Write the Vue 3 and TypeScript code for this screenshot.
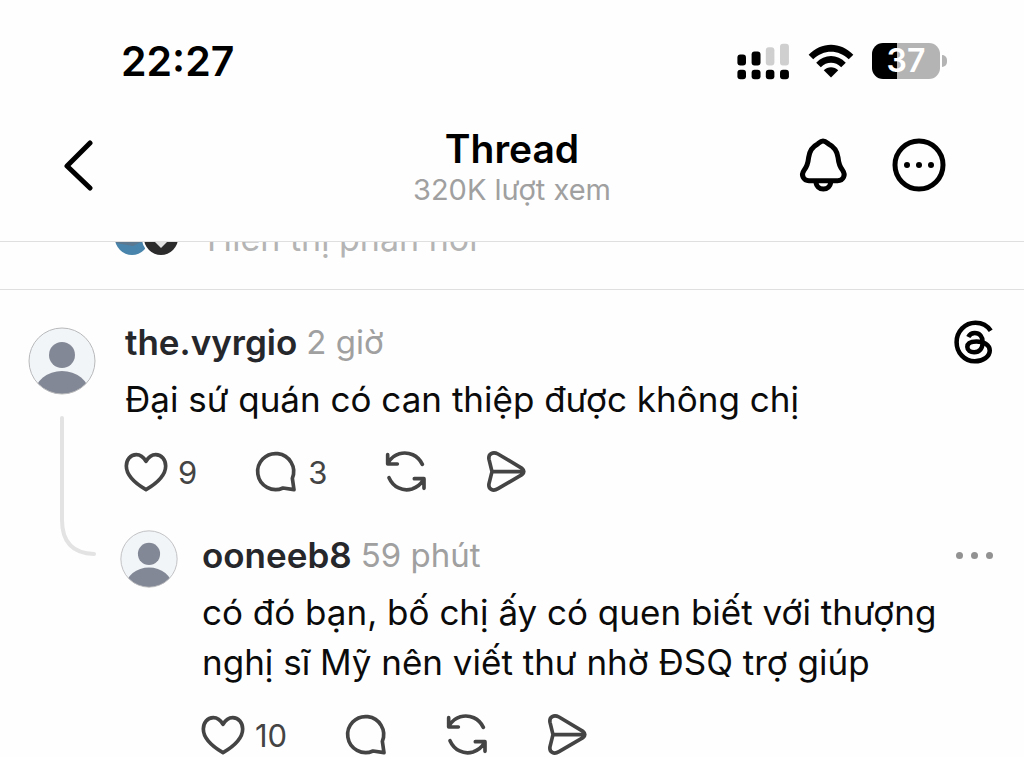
<script setup lang="ts">
interface Post {
  author: string
  age: string
  lines: string[]
  likes: number
  replies: number | null
}

const comment: Post = {
  author: 'the.vyrgio',
  age: '2 giờ',
  lines: ['Đại sứ quán có can thiệp được không chị'],
  likes: 9,
  replies: 3,
}

const reply: Post = {
  author: 'ooneeb8',
  age: '59 phút',
  lines: ['có đó bạn, bố chị ấy có quen biết với thượng', 'nghị sĩ Mỹ nên viết thư nhờ ĐSQ trợ giúp'],
  likes: 10,
  replies: null,
}

const posts = { comment, reply }
</script>

<template>
  <div class="screen">
    <div class="status">
      <time class="clock">22:27</time>
      <div class="indicators">
        <svg class="signal" viewBox="52 34 160 112" aria-hidden="true">
          <rect x="53" y="69" width="26" height="33" rx="9" />
          <rect x="96" y="60" width="27" height="42" rx="9" />
          <rect class="off" x="139" y="47" width="26" height="55" rx="9" />
          <rect class="off" x="182" y="36" width="27" height="66" rx="9" />
          <rect x="53" y="115" width="26" height="29" rx="9" />
          <rect x="96" y="115" width="27" height="29" rx="9" />
          <rect x="139" y="115" width="26" height="29" rx="9" />
          <rect x="182" y="115" width="27" height="29" rx="9" />
        </svg>
        <svg class="wifi" viewBox="262 36 140 106" aria-hidden="true">
          <path d="M264 70C302 29 362 29 400 70L386 84C355 53 309 53 278 84Z" />
          <path d="M287 94C312 67 352 67 377 94L363 108C345 90 319 90 301 108Z" />
          <path d="M310 117C322 105 342 105 354 117L332 139Z" />
        </svg>
        <div class="battery">
          <span class="level">37</span>
          <i class="nub"></i>
        </div>
      </div>
    </div>

    <header class="bar">
      <button class="icon-button back" type="button" aria-label="Quay lại">
        <svg viewBox="0 0 32 52"><path d="M28 4L5 27L28 49" /></svg>
      </button>
      <div class="titles">
        <h1>Thread</h1>
        <p>320K lượt xem</p>
      </div>
      <div class="tools">
        <button class="icon-button" type="button" aria-label="Thông báo">
          <svg viewBox="50 54 162 162">
            <path d="M128 63C121 63 117 68 112 72C96 80 88 92 85 112C83 132 79 142 71 151C61 165 69 182 86 182L172 182C189 182 197 165 187 151C179 142 175 132 173 112C170 92 161 80 145 72C140 68 135 63 128 63Z" />
            <path d="M107 184C107 215 151 215 151 184" />
          </svg>
        </button>
        <button class="icon-button" type="button" aria-label="Tùy chọn khác">
          <svg viewBox="335 54 162 162">
            <circle cx="416" cy="135" r="72" />
            <g class="dots">
              <circle cx="380" cy="135" r="9" />
              <circle cx="416" cy="135" r="9" />
              <circle cx="452" cy="135" r="9" />
            </g>
          </svg>
        </button>
      </div>
    </header>

    <div class="preview">
      <svg class="faces" viewBox="0 0 64 36" aria-hidden="true">
        <circle cx="17" cy="18" r="17" fill="#4884ab" />
        <path d="M0 18A17 17 0 0 1 34 18L34 25L26 22L18 26L1 23Z" fill="#5c7890" />
        <circle cx="46" cy="18" r="19" fill="#fff" />
        <circle cx="46" cy="18" r="17" fill="#2c2c2c" />
        <path d="M37 19L46 28L55 19Z" fill="#e3e3e3" />
      </svg>
      <a href="#replies">Hiển thị phản hồi</a>
    </div>

    <main id="replies" class="thread">
      <div class="gutter">
        <svg class="avatar" viewBox="0 0 68 68" role="img" aria-label="the.vyrgio">
          <clipPath id="face-a"><circle cx="34" cy="34" r="33" /></clipPath>
          <circle cx="34" cy="34" r="33" fill="#f2f5f8" />
          <g clip-path="url(#face-a)" fill="#838896">
            <circle cx="34" cy="28" r="13" />
            <ellipse cx="34" cy="66" rx="27" ry="22" />
          </g>
          <circle cx="34" cy="34" r="33" fill="none" stroke="#b8b9bb" />
        </svg>
        <svg class="connector" viewBox="0 0 68 142" aria-hidden="true">
          <path d="M34 3V105Q34 138 66 139" />
        </svg>
      </div>

      <div class="column">
        <article v-for="(post, kind) in posts" :key="kind" :class="['post', kind]">
          <svg v-if="kind === 'reply'" class="avatar" viewBox="0 0 68 68" role="img" aria-label="ooneeb8">
            <clipPath id="face-b"><circle cx="34" cy="34" r="33" /></clipPath>
            <circle cx="34" cy="34" r="33" fill="#f2f5f8" />
            <g clip-path="url(#face-b)" fill="#838896">
              <circle cx="34" cy="28" r="13" />
              <ellipse cx="34" cy="66" rx="27" ry="22" />
            </g>
            <circle cx="34" cy="34" r="33" fill="none" stroke="#b8b9bb" />
          </svg>
          <div class="content">
            <div class="byline">
              <strong>{{ post.author }}</strong>
              <span class="age">{{ post.age }}</span>
              <svg v-if="kind === 'comment'" class="brand" viewBox="16 14 120 135" role="img" aria-label="Threads">
                <path d="M129 47C119 31 103 22 82 22C50 22 24 49 24 82C24 114 48 141 80 141C106 141 126 126 126 108C126 90 108 80 85 80C68 80 57 86 57 97C57 107 67 113 78 113C95 113 104 101 104 82C104 65 95 54 80 54C71 54 64 58 60 66" />
              </svg>
              <button v-else class="more" type="button" aria-label="Thêm">
                <i></i><i></i><i></i>
              </button>
            </div>
            <p class="text">
              <template v-for="(line, n) in post.lines" :key="n"><br v-if="n > 0" />{{ line }}</template>
            </p>
            <div class="actions">
              <button type="button" aria-label="Thích">
                <svg viewBox="42 30 132 132">
                  <path d="M108 64C98 47 88 44 79 44C61 44 49 59 49 78C49 109 79 132 108 149C137 132 167 109 167 78C167 59 155 44 137 44C128 44 118 47 108 64Z" />
                </svg>
                <span>{{ post.likes }}</span>
              </button>
              <button type="button" aria-label="Trả lời">
                <svg viewBox="432 30 132 132">
                  <path d="M547 115A54 54 0 1 0 519 144L552 149Z" />
                </svg>
                <span v-if="post.replies !== null">{{ post.replies }}</span>
              </button>
              <button type="button" aria-label="Đăng lại">
                <svg viewBox="820 30 132 132">
                  <path d="M935 73C922 46 895 34 866 41C852 45 841 54 833 67M831 44V72H860" />
                  <path d="M835 113C848 142 876 155 904 147C919 142 930 133 938 120M940 145V116H911" />
                </svg>
              </button>
              <button type="button" aria-label="Chia sẻ">
                <svg viewBox="1124 30 132 132">
                  <path d="M1163 42L1235 85Q1246 94 1235 104L1163 146C1148 155 1133 148 1136 131L1145 95L1136 58C1133 41 1148 34 1163 42ZM1145 95H1239" />
                </svg>
              </button>
            </div>
          </div>
        </article>
      </div>
    </main>
  </div>
</template>

<style>
body {
  margin: 0;
  background: #fefefe;
}
</style>

<style scoped>
.screen {
  font-family: Inter, "Liberation Sans", sans-serif;
  color: #0b0b0c;
  overflow: hidden;
}

button {
  display: flex;
  align-items: center;
  padding: 0;
  border: 0;
  background: none;
  color: inherit;
  font: inherit;
  cursor: pointer;
}

h1,
p {
  margin: 0;
  font-weight: 400;
}

svg {
  display: block;
  flex: none;
}

.status {
  display: flex;
  align-items: center;
  justify-content: space-between;
  padding: 36px 77px 0 121px;
  height: 50px;
}

.clock {
  font-size: 41px;
  font-weight: 600;
  color: #000;
}

.indicators {
  display: flex;
  align-items: center;
  gap: 18px;
}

.signal {
  width: 53px;
  height: 37px;
}

.signal .off {
  fill: #cfcfcf;
}

.wifi {
  width: 46px;
  height: 36px;
}

.battery {
  display: flex;
  align-items: center;
  gap: 2px;
}

.level {
  width: 68px;
  height: 36px;
  border-radius: 11px;
  background: linear-gradient(90deg, #000 37%, #b4b4b4 37%);
  color: #fff;
  font-size: 32px;
  font-weight: 600;
  line-height: 36px;
  text-align: center;
}

.nub {
  width: 5px;
  height: 12px;
  border-radius: 0 6px 6px 0;
  background: #b4b4b4;
}

.bar {
  display: grid;
  grid-template-columns: 1fr auto 1fr;
  align-items: center;
  height: 153px;
  padding: 2px 78px 0;
  border-bottom: 1px solid #dfdfdf;
}

.icon-button svg {
  width: 54px;
  height: 54px;
  fill: none;
  stroke: #000;
  stroke-width: 15;
  stroke-linejoin: round;
}

.back {
  margin-left: -16px;
}

.icon-button.back svg {
  width: 32px;
  height: 52px;
  stroke-width: 5;
  stroke-linecap: round;
}

.icon-button .dots {
  fill: #000;
  stroke: none;
}

.titles {
  padding-top: 6px;
  text-align: center;
}

.titles h1 {
  font-size: 39px;
  font-weight: 600;
  line-height: 44px;
  color: #000;
}

.titles p {
  font-size: 29px;
  line-height: 38px;
  color: #a0a0a0;
}

.tools {
  display: flex;
  justify-content: flex-end;
  gap: 41px;
}

.preview {
  display: flex;
  align-items: flex-end;
  gap: 28px;
  height: 47px;
  padding-left: 115px;
  border-bottom: 1px solid #dfdfdf;
  overflow: hidden;
}

.preview a {
  padding-bottom: 25px;
  font-size: 34px;
  line-height: 50px;
  color: #b4b4b4;
  text-decoration: none;
}

.faces {
  width: 64px;
  height: 36px;
  padding-bottom: 33px;
}

.thread {
  display: grid;
  grid-template-columns: 68px 1fr;
  column-gap: 24px;
  padding: 30px 31px 0 28px;
}

.gutter .avatar {
  width: 68px;
  height: 68px;
  margin: 7px 0 20px;
}

.connector {
  width: 68px;
  height: 142px;
  fill: none;
  stroke: #e3e3e3;
  stroke-width: 4;
  stroke-linecap: round;
}

.post {
  display: flex;
  gap: 24px;
  padding-left: 5px;
}

.post.reply {
  padding: 39px 0 0;
}

.reply .avatar {
  width: 58px;
  height: 58px;
  margin-top: -3px;
}

.content {
  flex: 1;
  min-width: 0;
}

.byline {
  display: flex;
  align-items: center;
  gap: 9px;
  height: 44px;
  font-size: 33px;
}

.byline strong {
  font-size: 35px;
  font-weight: 600;
  color: #26272b;
}

.age {
  color: #a0a0a0;
}

.brand {
  width: 39px;
  height: 44px;
  margin-left: auto;
  fill: none;
  stroke: #000;
  stroke-width: 14;
}

.more {
  gap: 8px;
  height: 44px;
  margin-left: auto;
}

.more i {
  width: 7px;
  height: 7px;
  border-radius: 50%;
  background: #929292;
}

.text {
  margin-top: 10px;
  font-size: 35px;
  line-height: 50px;
  white-space: nowrap;
}

.actions {
  display: flex;
  gap: 57px;
  margin: 26px 0 0 -1px;
  color: #444;
}

.actions button {
  gap: 10px;
  height: 44px;
  font-size: 31px;
}

.actions svg {
  width: 44px;
  height: 44px;
  fill: none;
  stroke: #444;
  stroke-width: 11;
  stroke-linejoin: round;
  stroke-linecap: round;
}
</style>
